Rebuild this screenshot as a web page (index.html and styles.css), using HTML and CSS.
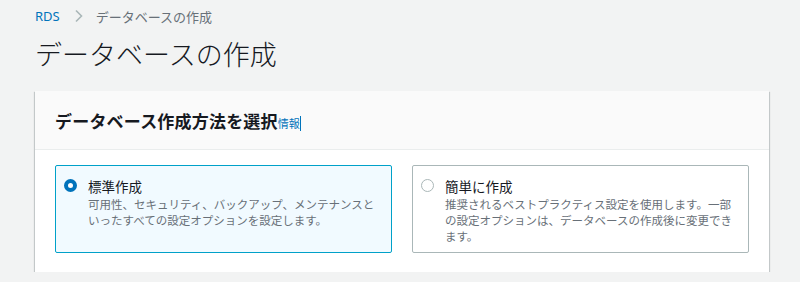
FILE: index.html
```html
<!DOCTYPE html>
<html lang="ja">
<head>
  <meta charset="UTF-8" />
  <title>データベースの作成</title>
  <link rel="stylesheet" href="styles.css">
</head>
<body>
  <nav class="breadcrumb">
    <a href="#">RDS</a>
    <svg class="sep" width="10" height="14" viewBox="0 0 10 14"><path d="M2 1.5 L7.5 7 L2 12.5" fill="none" stroke="#aab7b8" stroke-width="1.6"/></svg>
    <span class="current">データベースの作成</span>
  </nav>
  <h1 class="title">データベースの作成</h1>

  <div class="panel">
    <div class="panel-head">
      <h2>データベース作成方法を選択</h2><a class="info" href="#">情報</a><span class="caret"></span>
    </div>
    <div class="panel-body">
      <label class="tile selected">
        <span class="radio on"></span>
        <span class="tile-text">
          <span class="tile-label">標準作成</span>
          <span class="tile-desc">可用性、セキュリティ、バックアップ、メンテナンスといったすべての設定オプションを設定します。</span>
        </span>
      </label>
      <label class="tile">
        <span class="radio"></span>
        <span class="tile-text">
          <span class="tile-label">簡単に作成</span>
          <span class="tile-desc">推奨されるベストプラクティス設定を使用します。一部の設定オプションは、データベースの作成後に変更できます。</span>
        </span>
      </label>
    </div>
  </div>
</body>
</html>
```

FILE: styles.css
```css
body {
  margin: 0;
  padding: 0 31px 0 35px;
  background-color: #f2f3f3;
  font-family: "Noto Sans CJK JP", "Noto Sans", sans-serif;
  color: #16191f;
}
.breadcrumb {
  display: flex;
  align-items: center;
  height: 20px;
  padding-top: 6px;
  font-size: 13px;
}
.breadcrumb a {
  color: #0073bb;
  text-decoration: none;
  font-family: "Noto Sans", "Noto Sans CJK JP", sans-serif;
}
.breadcrumb .sep {
  margin: 0 12px 0 14px;
}
.breadcrumb .current {
  color: #687078;
}
.title {
  margin: 10px 0 0 0;
  font-size: 27px;
  font-weight: 300;
  line-height: 36px;
  height: 55px;
}
.panel {
  background: #fff;
  box-shadow: 0 1px 1px 0 rgba(0,28,36,0.3), 1px 1px 1px 0 rgba(0,28,36,0.15), -1px 1px 1px 0 rgba(0,28,36,0.15);
}
.panel-head {
  display: flex;
  align-items: center;
  height: 58px;
  padding: 0 20px;
  background: #fafafa;
  border-bottom: 1px solid #eaeded;
}
.panel-head h2 {
  margin: 0;
  font-size: 17px;
  font-weight: 700;
  letter-spacing: 0.2px;
}
.info {
  font-size: 11px;
  color: #0073bb;
  text-decoration: none;
  margin-top: 6px;
}
.caret {
  width: 1px;
  height: 15px;
  background: #0073bb;
  margin-top: 6px;
}
.panel-body {
  display: grid;
  grid-template-columns: 1fr 1fr;
  gap: 20px;
  padding: 15px 20px 19px;
}
.tile {
  display: flex;
  gap: 11px;
  height: 88px;
  box-sizing: border-box;
  padding: 10px 10px 0 8px;
  border: 1px solid #aab7b8;
  border-radius: 2px;
  background: #fff;
}
.tile.selected {
  border-color: #00a1c9;
  background: #f1faff;
}
.radio {
  flex: none;
  width: 13px;
  height: 13px;
  box-sizing: border-box;
  margin-top: 3px;
  border: 1.5px solid #aab7b8;
  border-radius: 50%;
  background: #fff;
}
.radio.on {
  border: 4px solid #0073bb;
}
.tile-text {
  display: flex;
  flex-direction: column;
}
.tile-label {
  font-size: 13.5px;
  line-height: 20px;
}
.tile-desc {
  font-size: 11.5px;
  line-height: 16px;
  color: #687078;
}
```
